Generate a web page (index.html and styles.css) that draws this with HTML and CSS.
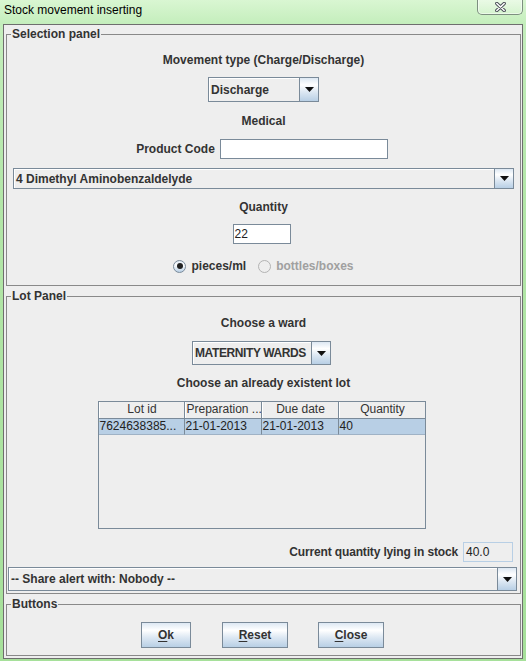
FILE: index.html
```html
<!DOCTYPE html>
<html>
<head>
<meta charset="utf-8">
<title>Stock movement inserting</title>
<link rel="stylesheet" href="styles.css">
</head>
<body>
<div class="window">
  <div class="titlebar">
    <span class="title">Stock movement inserting</span>
    <div class="close-btn">
      <svg width="11" height="10" viewBox="0 0 11 10"><path d="M1.8 1.5 L9.2 8.5 M9.2 1.5 L1.8 8.5" stroke="#4b5058" stroke-width="3.4" stroke-linecap="round" fill="none"/><path d="M1.8 1.5 L9.2 8.5 M9.2 1.5 L1.8 8.5" stroke="#ffffff" stroke-width="1.5" stroke-linecap="round" fill="none"/></svg>
    </div>
  </div>
  <div class="content">
    <fieldset class="panel sel-panel">
      <legend>Selection panel</legend>
      <div class="panel-body sel-body">
        <div class="label">Movement type (Charge/Discharge)</div>
        <div class="combo combo-move">
          <span class="combo-val">Discharge</span>
          <span class="combo-btn"><svg width="9" height="5" viewBox="0 0 9 5"><polygon points="0,0 9,0 4.5,5" fill="#111"/></svg></span>
        </div>
        <div class="label m-medical">Medical</div>
        <div class="field-row m-code">
          <span class="label">Product Code</span>
          <span class="textfield tf-code"></span>
        </div>
        <div class="combo combo-product">
          <span class="combo-val">4 Dimethyl Aminobenzaldelyde</span>
          <span class="combo-btn"><svg width="9" height="5" viewBox="0 0 9 5"><polygon points="0,0 9,0 4.5,5" fill="#111"/></svg></span>
        </div>
        <div class="label m-qty">Quantity</div>
        <span class="textfield tf-qty">22</span>
        <div class="radio-row">
          <span class="radio on"><span class="dot"></span></span>
          <span class="radio-text">pieces/ml</span>
          <span class="radio off"></span>
          <span class="radio-text disabled">bottles/boxes</span>
        </div>
      </div>
    </fieldset>

    <fieldset class="panel lot-panel">
      <legend>Lot Panel</legend>
      <div class="panel-body lot-body">
        <div class="label">Choose a ward</div>
        <div class="combo combo-ward shift">
          <span class="combo-val ward-val">MATERNITY WARDS</span>
          <span class="combo-btn"><svg width="9" height="5" viewBox="0 0 9 5"><polygon points="0,0 9,0 4.5,5" fill="#111"/></svg></span>
        </div>
        <div class="label m-lot">Choose an already existent lot</div>
        <div class="table-pane shift">
          <div class="thead">
            <span class="th center">Lot id</span>
            <span class="th">Preparation ...</span>
            <span class="th center">Due date</span>
            <span class="th center last">Quantity</span>
          </div>
          <div class="trow selected">
            <span class="td">7624638385...</span>
            <span class="td">21-01-2013</span>
            <span class="td">21-01-2013</span>
            <span class="td last">40</span>
          </div>
        </div>
        <div class="stock-row">
          <span class="label stock-label">Current quantity lying in stock</span>
          <span class="textfield tf-stock">40.0</span>
        </div>
        <div class="combo combo-share">
          <span class="combo-val">-- Share alert with: Nobody --</span>
          <span class="combo-btn"><svg width="9" height="5" viewBox="0 0 9 5"><polygon points="0,0 9,0 4.5,5" fill="#111"/></svg></span>
        </div>
      </div>
    </fieldset>

    <fieldset class="panel btn-panel">
      <legend>Buttons</legend>
      <div class="panel-body btn-body">
        <button class="btn btn-ok" type="button"><u>O</u>k</button>
        <button class="btn btn-reset" type="button"><u>R</u>eset</button>
        <button class="btn btn-close" type="button"><u>C</u>lose</button>
      </div>
    </fieldset>
  </div>
</div>
</body>
</html>
```
FILE: styles.css
```css
* { box-sizing: border-box; }
html, body { margin: 0; padding: 0; }
body {
  width: 526px;
  height: 661px;
  overflow: hidden;
  font-family: "Liberation Sans", Arial, sans-serif;
  font-size: 12px;
  color: #333333;
  background: #a8e29c;
}

.window {
  width: 526px;
  height: 661px;
  display: flex;
  flex-direction: column;
  padding: 0 3px 2px 3px;
  background: linear-gradient(180deg, #d9f6d2 0px, #c4eebc 24px, #b3e6a8 200px, #a6e09a 661px);
}

.titlebar {
  height: 24px;
  flex: none;
  display: flex;
  justify-content: space-between;
  align-items: flex-start;
}
.title {
  font-family: "Liberation Sans", Arial, sans-serif;
  font-size: 12px;
  color: #000;
  line-height: 20px;
  padding-left: 1px;
}
.close-btn {
  width: 46px;
  height: 16px;
  margin-top: -1px;
  border: 1px solid #7d8f80;
  border-top: none;
  border-radius: 0 0 5px 5px;
  background: linear-gradient(180deg, rgba(255,255,255,0.45), rgba(255,255,255,0.15));
  display: flex;
  justify-content: center;
  align-items: center;
  box-shadow: inset 0 0 0 1px rgba(255,255,255,0.5);
}

.content {
  flex: 1;
  background: #eeeeee;
  border: 1px solid #6e6e6e;
  padding: 2px 1px 0 2px;
  display: flex;
  flex-direction: column;
}

.panel {
  margin: 0;
  padding: 0;
  border: 1px solid #898989;
  min-width: 0;
}
.panel + .panel { margin-top: 3px; }
.panel legend {
  padding: 0 1px;
  margin-left: 4px;
  font-weight: bold;
  font-size: 12px;
  line-height: 14px;
  color: #333333;
}
.panel-body {
  display: flex;
  flex-direction: column;
  align-items: center;
}

.label {
  font-weight: bold;
  line-height: 14px;
  white-space: nowrap;
  color: #333333;
}

/* Selection panel */
.sel-body { padding: 12px 6px 11px 6px; }
.combo-move { margin-top: 10px; width: 111px; height: 25px; }
.m-medical { margin-top: 12px; }
.m-code { margin-top: 11px; margin-right: 3px; }
.combo-product { margin-top: 9px; align-self: stretch; height: 21px; }
.m-qty { margin-top: 11px; }
.tf-qty { margin-top: 10px; width: 58px; margin-right: 4px; }

.field-row {
  display: flex;
  align-items: center;
  gap: 5px;
  height: 20px;
}
.tf-code { width: 168px; }

.textfield {
  display: flex;
  align-items: center;
  height: 20px;
  background: #ffffff;
  border: 1px solid #7a8a99;
  padding-left: 1px;
  font-size: 12px;
  color: #222;
}

.radio-row {
  margin-top: 14px;
  height: 16px;
  display: flex;
  align-items: center;
}
.radio {
  width: 13px;
  height: 13px;
  border-radius: 50%;
  display: flex;
  align-items: center;
  justify-content: center;
}
.radio.on {
  border: 1px solid #7a8a99;
  background: linear-gradient(180deg, #dde8f3 0%, #ffffff 35%, #b8cfe5 100%);
}
.radio.on .dot {
  width: 6px;
  height: 6px;
  border-radius: 50%;
  background: #222;
}
.radio.off {
  border: 1px solid #b3b3b3;
  background: #eeeeee;
  margin-left: 12px;
}
.radio-text {
  margin-left: 5px;
  font-weight: bold;
  line-height: 14px;
}
.radio-text.disabled { color: #a0a0a0; }

/* Combo */
.combo {
  display: flex;
  border: 1px solid #7a8a99;
  background: #eeeeee;
  box-shadow: inset 1px 1px 0 #ffffff;
}
.combo-val {
  flex: 1;
  display: flex;
  align-items: center;
  padding-left: 2px;
  font-weight: bold;
  white-space: nowrap;
  overflow: hidden;
}
.ward-val { letter-spacing: -0.4px; }
.combo-btn {
  width: 19px;
  flex: none;
  border-left: 1px solid #7a8a99;
  background: linear-gradient(180deg, #dde8f3 0%, #ffffff 30%, #dde8f3 60%, #b8cfe5 100%);
  display: flex;
  align-items: center;
  justify-content: center;
}

/* Lot panel */
.lot-body { padding: 13px 0 2px 0; }
.shift { margin-right: 4px; }
.combo-ward { margin-top: 11px; width: 139px; height: 24px; }
.m-lot { margin-top: 11px; }
.table-pane {
  margin-top: 11px;
  width: 328px;
  height: 128px;
  border: 1px solid #7a8a99;
  background: #eeeeee;
}
.thead, .trow {
  display: grid;
  grid-template-columns: 86px 77px 77px 86px;
}
.thead { height: 17px; border-bottom: 1px solid #7a8a99; }
.th {
  border-right: 1px solid #7a8a99;
  border-left: 1px solid #ffffff;
  line-height: 15px;
  padding-left: 1px;
  white-space: nowrap;
  overflow: hidden;
  color: #333;
}
.th.center { text-align: center; }
.th.last, .td.last { border-right: none; }
.trow { height: 16px; }
.trow.selected { background: #b8cfe5; }
.td {
  border-right: 1px solid #7a8a99;
  border-bottom: 1px solid #9fb2c5;
  line-height: 15px;
  padding-left: 1px;
  white-space: nowrap;
  overflow: hidden;
  color: #222;
}

.stock-row {
  margin-top: 13px;
  align-self: stretch;
  display: flex;
  justify-content: flex-end;
  align-items: center;
  gap: 5px;
  padding-right: 7px;
  height: 20px;
}
.stock-label { letter-spacing: -0.15px; }
.tf-stock {
  width: 50px;
  background: #eeeeee;
  border-color: #b8cfe5;
  padding-left: 2px;
}
.combo-share {
  margin: 5px 3px 0 1px;
  align-self: stretch;
  height: 24px;
}

/* Buttons panel */
.btn-body {
  padding: 11px 2px 7px 0;
  flex-direction: row;
  justify-content: center;
  gap: 0;
}
.btn {
  height: 26px;
  border: 1px solid #7a8a99;
  background: linear-gradient(180deg, #dde8f3 0%, #ffffff 30%, #dde8f3 60%, #b8cfe5 100%);
  font-family: "Liberation Sans", Arial, sans-serif;
  font-weight: bold;
  font-size: 12px;
  color: #333333;
  padding: 0;
  margin: 0;
  border-radius: 0;
}
.btn u { text-decoration-thickness: 1px; text-underline-offset: 2px; }
.btn-ok { width: 50px; }
.btn-reset { width: 66px; margin-left: 31px; }
.btn-close { width: 66px; margin-left: 30px; }
```
